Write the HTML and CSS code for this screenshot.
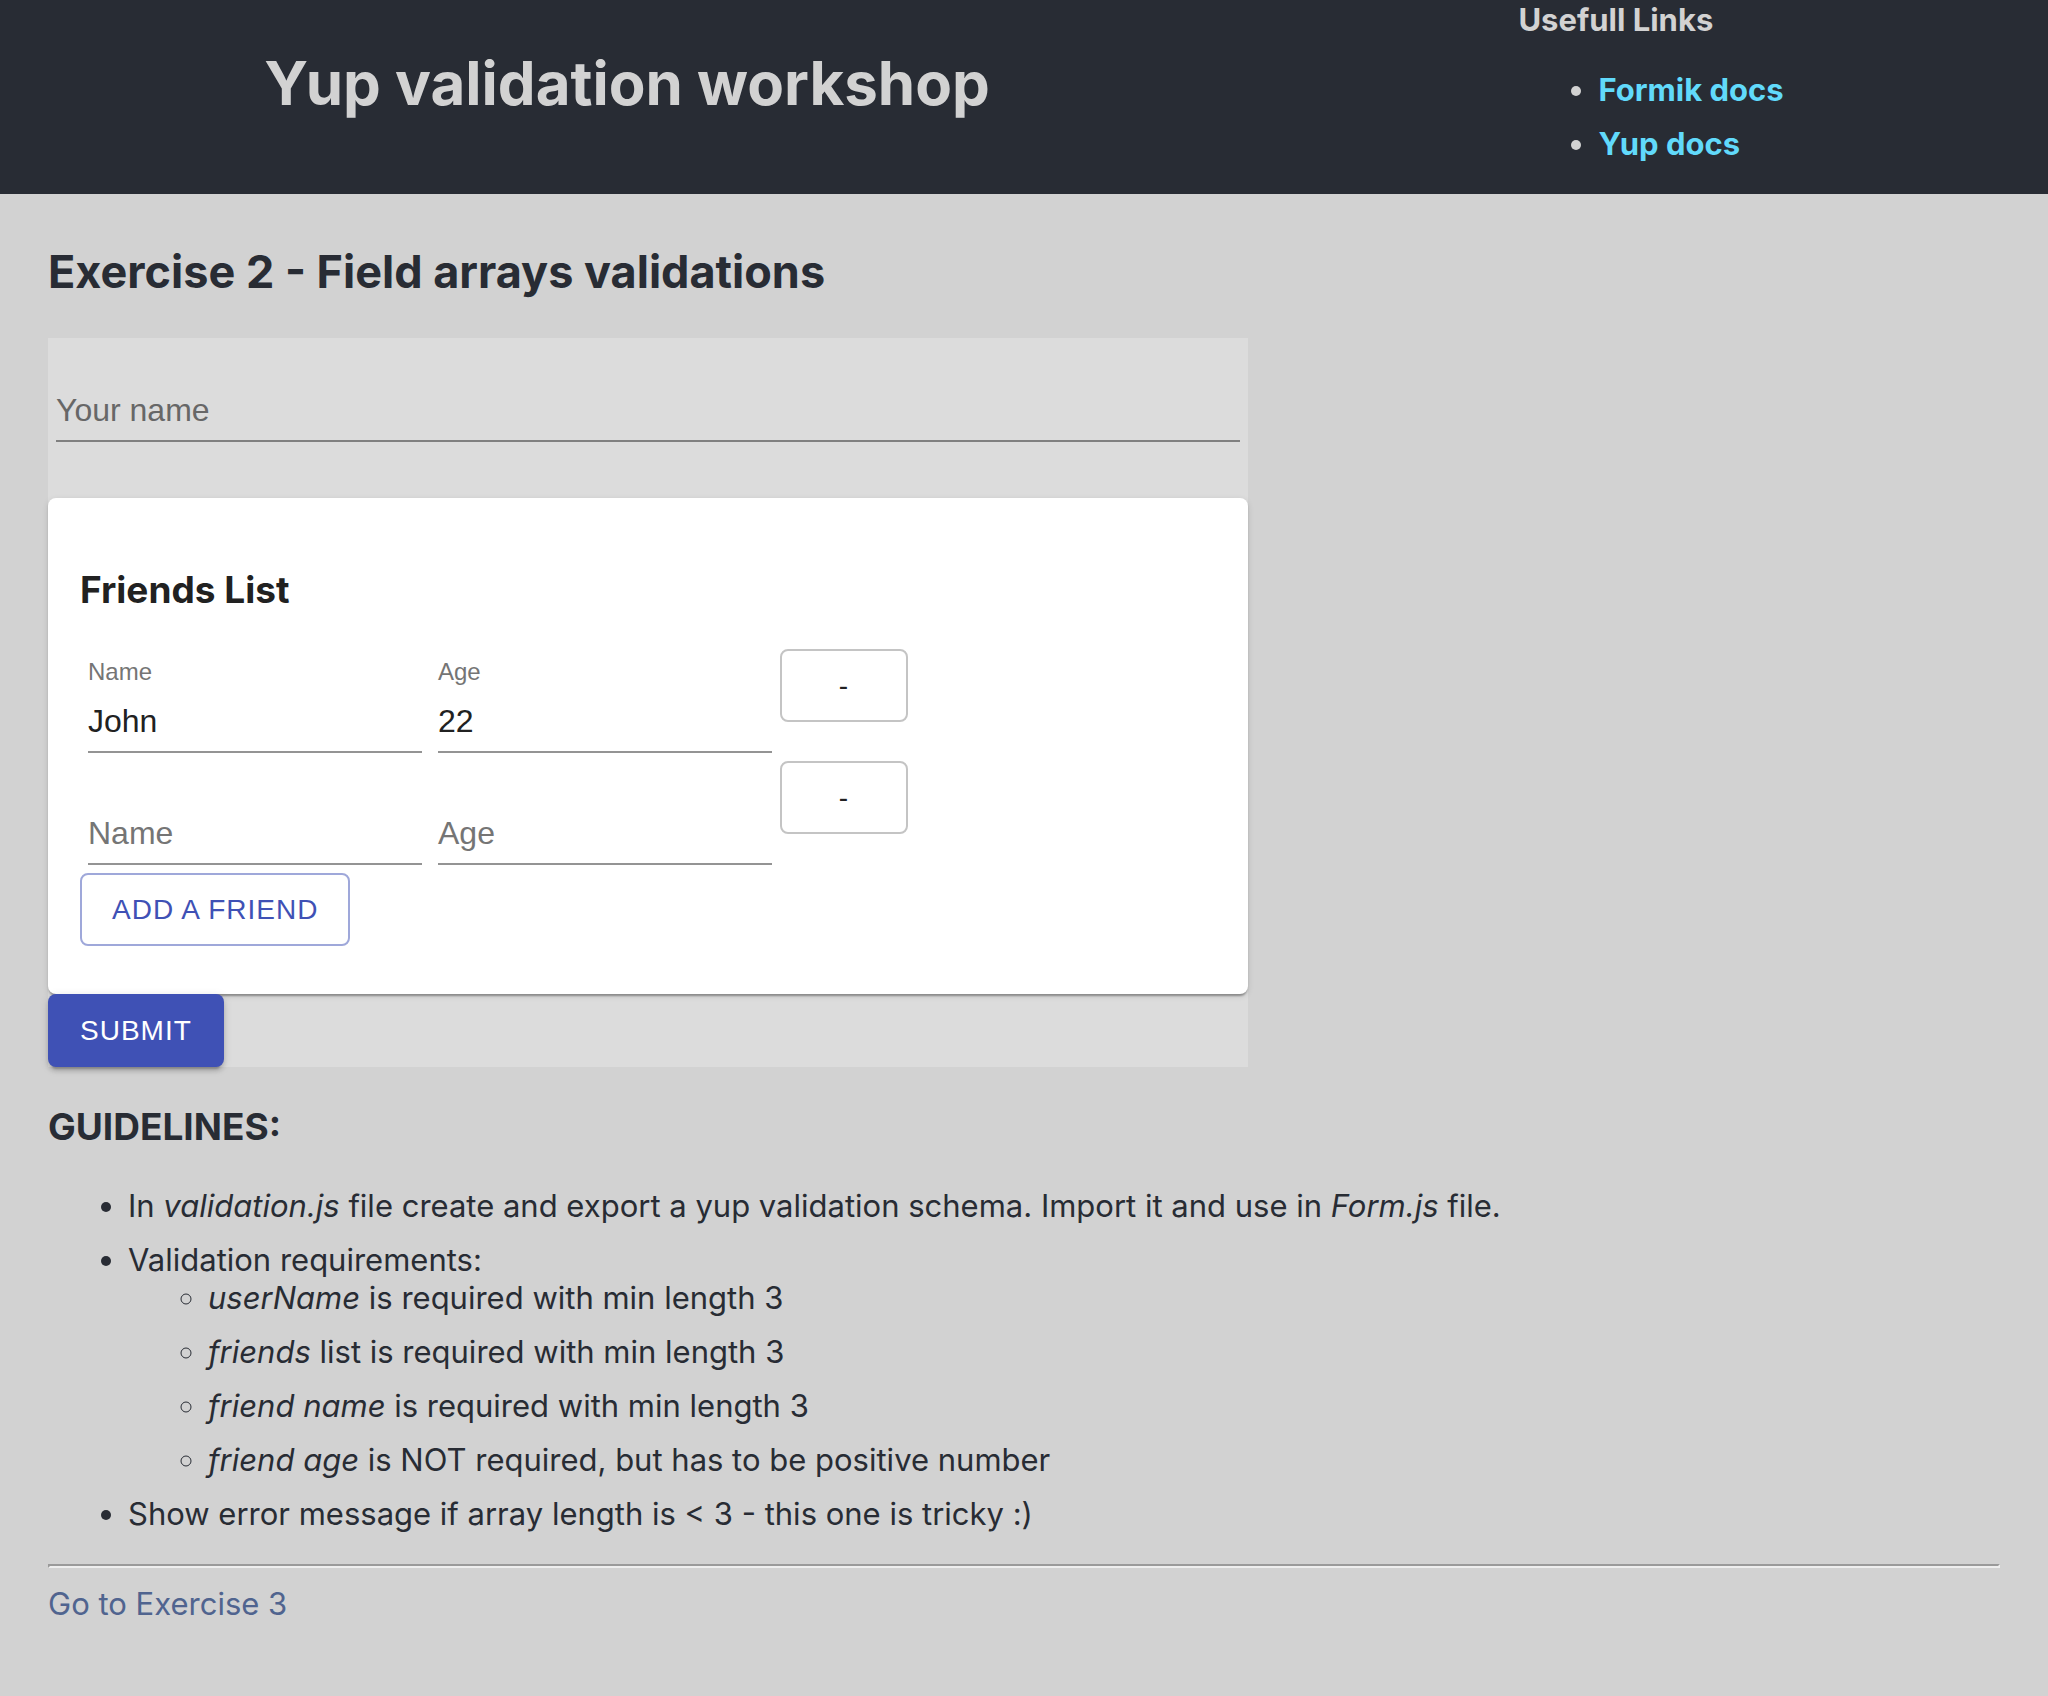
FILE: index.html
```html
<!DOCTYPE html>
<html lang="en">
<head>
<meta charset="utf-8">
<meta name="viewport" content="width=device-width, initial-scale=1">
<title>Yup validation workshop</title>
<link rel="stylesheet" href="styles.css">
</head>
<body>
<header class="header">
  <h1 class="header-title">Yup validation workshop</h1>
  <nav class="header-links">
    <span>Usefull Links</span>
    <ul class="list">
      <li><a class="docs-link" href="#formik">Formik docs</a></li>
      <li><a class="docs-link" href="#yup">Yup docs</a></li>
    </ul>
  </nav>
</header>
<main class="content">
  <h2 class="exercise-title">Exercise 2 - Field arrays validations</h2>
  <form class="form">
    <div class="field field-wide">
      <label class="field-label" for="userName">Your name</label>
      <input class="field-input" id="userName" type="text">
    </div>
    <section class="paper">
      <h3 class="section-title">Friends List</h3>
      <div class="friend">
        <div class="field">
          <label class="field-label field-label-small" for="name0">Name</label>
          <input class="field-input" id="name0" type="text" value="John">
        </div>
        <div class="field">
          <label class="field-label field-label-small" for="age0">Age</label>
          <input class="field-input" id="age0" type="text" value="22">
        </div>
        <button class="button button-outlined" type="button">-</button>
      </div>
      <div class="friend">
        <div class="field">
          <label class="field-label" for="name1">Name</label>
          <input class="field-input" id="name1" type="text">
        </div>
        <div class="field">
          <label class="field-label" for="age1">Age</label>
          <input class="field-input" id="age1" type="text">
        </div>
        <button class="button button-outlined" type="button">-</button>
      </div>
      <button class="button button-outlined button-primary" type="button">Add a friend</button>
    </section>
    <button class="button button-contained" type="submit">Submit</button>
  </form>
  <h3 class="section-title">GUIDELINES:</h3>
  <ul class="list">
    <li>In <i>validation.js</i> file create and export a yup validation schema. Import it and use in <i>Form.js</i> file.</li>
    <li>Validation requirements:
      <ul class="list list-nested">
        <li><i>userName</i> is required with min length 3</li>
        <li><i>friends</i> list is required with min length 3</li>
        <li><i>friend name</i> is required with min length 3</li>
        <li><i>friend age</i> is NOT required, but has to be positive number</li>
      </ul>
    </li>
    <li>Show error message if array length is &lt; 3 - this one is tricky :)</li>
  </ul>
  <hr class="divider">
  <a class="next-link" href="#exercise-3">Go to Exercise 3</a>
</main>
</body>
</html>
```
FILE: styles.css
```css
* {
  box-sizing: border-box;
}

body {
  margin: 0;
  background: #d2d2d2;
  color: #282c34;
  font-family: Inter, "Liberation Sans", sans-serif;
  font-size: 31px;
  line-height: 38px;
}

.header {
  display: flex;
  justify-content: space-around;
  align-items: flex-start;
  padding-top: 1px;
  background: #282c34;
  color: #d2d2d2;
}

.header-title {
  margin: 44px 0 0;
  font-size: 60px;
  line-height: 76px;
}

.header-links {
  font-weight: 700;
}

.docs-link {
  color: #61dafb;
  text-decoration: none;
}

.list {
  margin: 32px 0 31px;
  padding-left: 80px;
}

.list li {
  margin-bottom: 16px;
}

.list-nested {
  margin: 0;
}

.content {
  padding: 0 48px;
}

.exercise-title {
  margin: 0;
  padding: 50px 0 38px;
  font-size: 45px;
  line-height: 56px;
}

.form {
  max-width: 1200px;
  background: #dcdcdc;
}

.field {
  position: relative;
  flex: none;
  width: 334px;
  margin: 8px;
  padding-top: 32px;
}

.field-wide {
  width: auto;
  margin: 0 8px 56px;
  padding-top: 40px;
}

.field-label {
  position: absolute;
  left: 0;
  bottom: 16px;
  color: #757575;
  font-family: "Liberation Sans", Arial, sans-serif;
  font-size: 32px;
  line-height: 32px;
  pointer-events: none;
}

.field-wide .field-label {
  color: #676767;
}

.field-label-small {
  bottom: 65px;
  font-size: 24px;
}

.field-input {
  display: block;
  width: 100%;
  height: 64px;
  padding: 14px 0 12px;
  border: 0;
  border-bottom: 2px solid rgba(0, 0, 0, 0.42);
  border-radius: 0;
  outline: 0;
  background: transparent;
  color: #212121;
  font-family: "Liberation Sans", Arial, sans-serif;
  font-size: 32px;
}

.paper {
  padding: 32px 32px 48px;
  border-radius: 8px;
  background: #fff;
  box-shadow: 0 4px 2px -2px rgba(0, 0, 0, 0.2), 0 2px 2px rgba(0, 0, 0, 0.14), 0 2px 6px rgba(0, 0, 0, 0.12);
  color: #212121;
}

.section-title {
  margin: 38px 0;
  font-size: 37px;
  line-height: 44px;
}

.paper .section-title {
  margin-bottom: 37px;
}

.friend {
  display: flex;
  align-items: flex-start;
}

.button {
  display: block;
  min-width: 128px;
  height: 73px;
  padding: 0 32px;
  border: 0;
  border-radius: 8px;
  font-family: "Liberation Sans", Arial, sans-serif;
  font-size: 28px;
  letter-spacing: 1px;
  text-transform: uppercase;
}

.button-outlined {
  padding: 0 30px;
  border: 2px solid #c4c4c4;
  background: transparent;
  color: #212121;
}

.button-primary {
  border-color: #9fa8da;
  color: #3f51b5;
}

.button-contained {
  background: #3f51b5;
  color: #fff;
  box-shadow: 0 6px 2px -4px rgba(0, 0, 0, 0.2), 0 4px 4px rgba(0, 0, 0, 0.14), 0 2px 10px rgba(0, 0, 0, 0.12);
}

.divider {
  margin: 0 0 17px;
  border: 2px solid;
  border-color: #9a9a9a #eee #eee #9a9a9a;
}

.next-link {
  color: #50648f;
  text-decoration: none;
}
```
